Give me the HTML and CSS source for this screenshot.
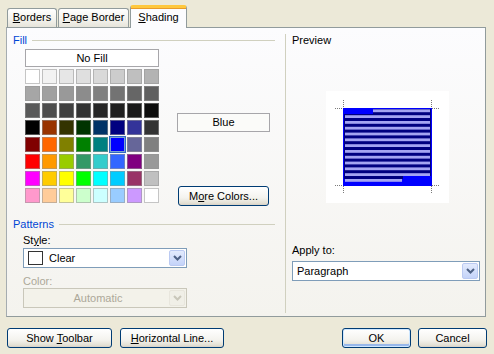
FILE: index.html
```html
<!DOCTYPE html>
<html lang="en">
<head>
  <meta charset="UTF-8" />
  <title>Borders and Shading</title>
  <link rel="stylesheet" href="styles.css">
</head>
<body>
  <div class="dialog">
    <div class="tabs">
      <div class="tab"><u>B</u>orders</div>
      <div class="tab"><u>P</u>age Border</div>
      <div class="tab tab-active"><u>S</u>hading</div>
    </div>

    <div class="panel">
      <div class="left">
        <div class="group-title">Fill</div>
        <div class="fill-body">
          <div class="palette-col">
            <div class="no-fill">No Fill</div>
            <div class="palette" id="palette"></div>
          </div>
          <div class="fill-side">
            <div class="color-name">Blue</div>
            <button class="btn btn-more">M<u>o</u>re Colors...</button>
          </div>
        </div>

        <div class="group-title group-patterns">Patterns</div>
        <div class="field-label">St<u>y</u>le:</div>
        <div class="combo combo-style">
          <div class="combo-text"><span class="swatch"></span>Clear</div>
          <div class="combo-btn">
            <svg width="9" height="6" viewBox="0 0 9 6"><path d="M1 1 L4.5 4.5 L8 1" fill="none" stroke="#4d6185" stroke-width="2"/></svg>
          </div>
        </div>
        <div class="field-label field-disabled">Color:</div>
        <div class="combo combo-style combo-disabled">
          <div class="combo-text">Automatic</div>
          <div class="combo-btn">
            <svg width="9" height="6" viewBox="0 0 9 6"><path d="M1 1 L4.5 4.5 L8 1" fill="none" stroke="#c9c7ba" stroke-width="2"/></svg>
          </div>
        </div>
      </div>

      <div class="right">
        <div class="right-label">Preview</div>
        <div class="preview">
          <svg width="123" height="112" viewBox="0 0 123 112">
            <rect x="17" y="17" width="89" height="78" fill="#0000ff"/>
            <rect x="18" y="18" width="87" height="70" fill="#000080"/>
            <rect x="18" y="18" width="29" height="5" fill="#0000ff"/>
            <rect x="77" y="85" width="28" height="9" fill="#0000ff"/>
            <g id="bars" fill="#a4a4f2"></g>
            <g fill="none" stroke="#7a7a7a" stroke-dasharray="1 1">
              <path d="M17.5 9 V17 M9 17.5 H17"/>
              <path d="M105.5 9 V17 M106 17.5 H114"/>
              <path d="M17.5 95 V103 M9 94.5 H17"/>
              <path d="M105.5 95 V103 M106 94.5 H114"/>
            </g>
          </svg>
        </div>
        <div class="right-label apply-label">Apply to:</div>
        <div class="combo combo-apply">
          <div class="combo-text">Paragraph</div>
          <div class="combo-btn">
            <svg width="9" height="6" viewBox="0 0 9 6"><path d="M1 1 L4.5 4.5 L8 1" fill="none" stroke="#4d6185" stroke-width="2"/></svg>
          </div>
        </div>
      </div>
    </div>

    <div class="buttons">
      <button class="btn btn-toolbar">Show <u>T</u>oolbar</button>
      <button class="btn btn-hline"><u>H</u>orizontal Line...</button>
      <button class="btn btn-ok">OK</button>
      <button class="btn btn-cancel">Cancel</button>
    </div>
  </div>

  <script>
    const colors = [
      "#ffffff", "#f2f2f2", "#e6e6e6", "#dfdfdf", "#d9d9d9", "#cccccc", "#bfbfbf", "#b3b3b3",
      "#a6a6a6", "#a0a0a0", "#999999", "#8c8c8c", "#808080", "#737373", "#666666", "#606060",
      "#595959", "#4d4d4d", "#404040", "#333333", "#262626", "#202020", "#1a1a1a", "#0d0d0d",
      "#000000", "#993300", "#333300", "#003300", "#003366", "#000080", "#333399", "#333333",
      "#800000", "#ff6600", "#808000", "#008000", "#008080", "#0000ff", "#666699", "#808080",
      "#ff0000", "#ff9900", "#99cc00", "#339966", "#33cccc", "#3366ff", "#800080", "#999999",
      "#ff00ff", "#ffcc00", "#ffff00", "#00ff00", "#00ffff", "#00ccff", "#993366", "#c0c0c0",
      "#ff99cc", "#ffcc99", "#ffff99", "#ccffcc", "#ccffff", "#99ccff", "#cc99ff", "#ffffff"
    ];
    const selected = 37;

    const palette = document.getElementById("palette");
    colors.forEach((c, i) => {
      const cell = document.createElement("div");
      cell.className = i === selected ? "cell cell-selected" : "cell";
      cell.style.background = c;
      palette.appendChild(cell);
    });

    // text lines in the preview
    const bars = document.getElementById("bars");
    for (let i = 0; i < 13; i++) {
      const r = document.createElementNS("http://www.w3.org/2000/svg", "rect");
      const x1 = i === 0 ? 47 : 19;
      const x2 = i === 12 ? 76 : 104;
      r.setAttribute("x", x1);
      r.setAttribute("y", (18.4 + i * 5.8).toFixed(1));
      r.setAttribute("width", x2 - x1);
      r.setAttribute("height", 2.8);
      bars.appendChild(r);
    }
  </script>
</body>
</html>
```

FILE: styles.css
```css
body {
  margin: 0;
  width: 494px;
  height: 354px;
  background: #ece9d8;
  font-family: 'Liberation Sans', Arial, sans-serif;
  font-size: 11px;
  color: #000;
  overflow: hidden;
}
.dialog {
  display: flex;
  flex-direction: column;
}

/* Tabs */
.tabs {
  display: flex;
  align-items: flex-end;
  gap: 1px;
  height: 22px;
  padding: 5px 0 0 7px;
}
.tab {
  box-sizing: border-box;
  height: 19px;
  padding: 0 2px;
  line-height: 17px;
  white-space: nowrap;
  text-align: center;
  border: 1px solid #919b9c;
  border-bottom: none;
  border-radius: 3px 3px 0 0;
  background: linear-gradient(#ffffff, #f3f2ec 60%, #e6e4da);
}
.tab:nth-child(1) { width: 50px; }
.tab:nth-child(2) { width: 71px; }
.tab-active {
  position: relative;
  z-index: 1;
  width: 57px;
  height: 23px;
  margin-bottom: -1px;
  line-height: 18px;
  border-top: 3px solid #ffc83c;
  box-shadow: inset 0 1px 0 #e89b2a;
  background: #fcfcfe;
}

/* Panel */
.panel {
  box-sizing: border-box;
  display: flex;
  width: 480px;
  height: 290px;
  margin-left: 6px;
  border: 1px solid #919b9c;
  border-left-color: #a5acb0;
  background: linear-gradient(#fcfcfe, #f4f3ee);
}
.left {
  width: 278px;
}
.right {
  flex: 1;
  margin: 6px 0 3px;
  border-left: 1px solid #d0d0bf;
}

.group-title {
  display: flex;
  align-items: center;
  gap: 5px;
  height: 13px;
  line-height: 13px;
  margin: 6px 10px 0 6px;
  color: #0046d5;
}
.group-title::after {
  content: "";
  flex: 1;
  height: 1px;
  background: #d0d0bf;
}
.group-patterns {
  margin-top: 12px;
}

/* Fill */
.fill-body {
  display: flex;
  margin-top: 2px;
  padding-left: 18px;
}
.palette-col {
  width: 134px;
}
.no-fill {
  box-sizing: border-box;
  height: 18px;
  line-height: 16px;
  margin-bottom: 2px;
  border: 1px solid #a7a6aa;
  background: #fff;
  text-align: center;
}
.palette {
  display: grid;
  grid-template-columns: repeat(8, 15px);
  grid-auto-rows: 15px;
  gap: 2px;
}
.cell {
  box-sizing: border-box;
  box-shadow: inset 0 0 0 1px rgba(150, 150, 150, 0.55);
}
.cell-selected {
  box-shadow: 0 0 0 1px #316ac5, inset 0 0 0 1px #7da2ce;
}
.fill-side {
  display: flex;
  flex-direction: column;
  margin-left: 18px;
}
.color-name {
  box-sizing: border-box;
  width: 93px;
  height: 19px;
  margin-top: 64px;
  line-height: 17px;
  border: 1px solid #a7a6aa;
  background: #fbfbf9;
  text-align: center;
}

/* Buttons */
.btn {
  box-sizing: border-box;
  height: 20px;
  padding: 0;
  border: 1px solid #003c74;
  border-radius: 3px;
  background: linear-gradient(#ffffff, #f4f3ee 60%, #e3e0d4 90%, #d6d0c5);
  font-family: inherit;
  font-size: 11px;
  color: #000;
}
.btn-more {
  width: 91px;
  margin: 54px 0 0 1px;
}

/* Fields */
.field-label {
  height: 13px;
  line-height: 13px;
  margin: 3px 0 0 16px;
}
.field-disabled {
  margin-top: 7px;
  color: #aca899;
}
.combo {
  box-sizing: border-box;
  display: flex;
  height: 20px;
  border: 1px solid #7f9db9;
  background: #fff;
}
.combo-style {
  width: 164px;
  margin: 1px 0 0 16px;
}
.combo-disabled {
  margin-top: 0;
  border-color: #c9c7ba;
  background: #f3f2ea;
}
.combo-text {
  flex: 1;
  display: flex;
  align-items: center;
  gap: 6px;
  padding-left: 4px;
}
.combo-disabled .combo-text {
  justify-content: center;
  color: #aca899;
}
.swatch {
  box-sizing: border-box;
  width: 15px;
  height: 14px;
  border: 1px solid #333;
  background: #fff;
}
.combo-btn {
  box-sizing: border-box;
  display: flex;
  align-items: center;
  justify-content: center;
  width: 16px;
  margin: 1px;
  border: 1px solid #bbcaf2;
  border-radius: 2px;
  background: linear-gradient(#e3ebfd, #c4d3f9);
}
.combo-disabled .combo-btn {
  border-color: #e8e6dd;
  background: #f0efe7;
}

/* Preview */
.right-label {
  height: 13px;
  line-height: 13px;
  padding-left: 6px;
}
.preview {
  width: 123px;
  height: 112px;
  margin: 44px 0 0 40px;
  background: #fff;
}
.preview svg {
  display: block;
}
.apply-label {
  margin-top: 41px;
}
.combo-apply {
  width: 188px;
  margin: 4px 0 0 6px;
}

/* Bottom row */
.buttons {
  display: flex;
  gap: 8px;
  margin-top: 11px;
  padding: 0 7px;
}
.btn-toolbar { width: 105px; }
.btn-hline { width: 104px; }
.btn-ok {
  width: 69px;
  margin-left: auto;
  box-shadow: inset 0 0 0 1px #cee7ff, inset 0 -2px 0 1px #98b8ea;
}
.btn-cancel {
  width: 69px;
  margin-left: -1px;
}
```
